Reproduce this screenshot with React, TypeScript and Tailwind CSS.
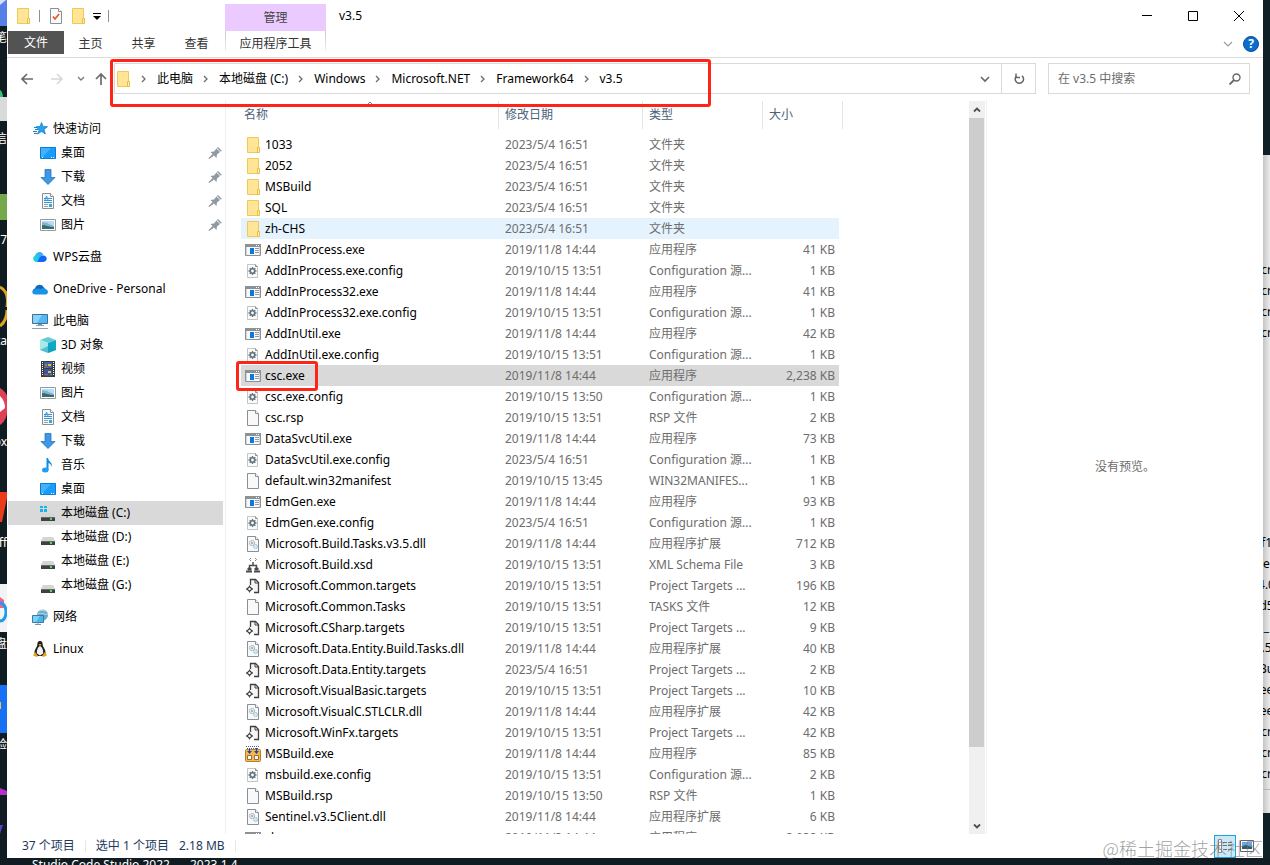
import type { ReactNode } from 'react';

type IconName =
  | 'folder'
  | 'exe'
  | 'config'
  | 'blank'
  | 'dll'
  | 'xsd'
  | 'targets'
  | 'msbuild'
  | 'star'
  | 'desktop'
  | 'download'
  | 'document'
  | 'picture'
  | 'wps'
  | 'onedrive'
  | 'pc'
  | 'cube'
  | 'video'
  | 'music'
  | 'systemDisk'
  | 'disk'
  | 'network'
  | 'linux'
  | 'pin'
  | 'check';

const DISK = (
  <>
    <path d="M3 8h10l2 4H1z" fill="#d3d5d7" />
    <path d="M1 12h14v4H1z" fill="#3f4244" />
    <path d="M1 12h14v1H1z" fill="#686b6e" />
    <path d="M10 13h2v2h-2z" fill="#4ee04e" />
  </>
);

const PAGE = (
  <>
    <path d="M2.5.5h8l3 3v12h-11z" fill="#f8f9fa" stroke="#8b8f92" />
    <path d="M10.5.5v3h3" fill="#fff" stroke="#8b8f92" />
  </>
);

const ICONS: Record<IconName, ReactNode> = {
  folder: (
    <>
      <path d="M2.5.5h11v15h-11z" fill="#ffe595" stroke="#efc958" />
      <path d="M12.5 10.5h2v5h-2z" fill="#fff0b8" stroke="#e7bd45" />
    </>
  ),
  exe: (
    <>
      <path d="M.5 2.5h15v11H.5z" fill="#f7f8f9" stroke="#8c9196" />
      <path d="M0 2h16v3H0z" fill="#8c9196" />
      <path d="M11 3h1v1h-1zM13 3h1v1h-1z" fill="#fff" />
      <path d="M1.5 5v8M14.5 5v8" stroke="#d3d7da" />
      <path d="M5 6h4v6H5z" fill="#0b78dc" />
      <path d="M10 6.5h4M10 8.5h4M10 10.5h4" stroke="#969b9f" />
    </>
  ),
  config: (
    <>
      <path d="M2.5 1.5h8l2 2v11h-10z" fill="#fafbfb" stroke="#c2c5c7" />
      <path d="M10.5 1.5v2h2" fill="none" stroke="#8b8f92" />
      <circle cx="7.5" cy="8" r="2.2" fill="#fff" stroke="#63727b" strokeWidth="1.6" />
      <path
        d="M7.5 4v1.4M7.5 10.6V12M3.5 8h1.4M10.1 8h1.4M4.7 5.2l1 1M9.3 9.8l1 1M4.7 10.8l1-1M9.3 6.2l1-1"
        stroke="#63727b"
        strokeWidth="1.3"
      />
    </>
  ),
  blank: PAGE,
  dll: (
    <>
      {PAGE}
      <circle cx="7" cy="7" r="2.6" fill="#e9edf0" stroke="#8d979e" strokeDasharray="1.2 .6" />
      <circle cx="7" cy="7" r=".9" fill="#8d979e" />
      <circle cx="10.5" cy="10.5" r="2" fill="#d6ebf7" stroke="#7fb2d0" strokeDasharray="1 .5" />
    </>
  ),
  xsd: (
    <g fill="none" stroke="#4b4b4b">
      <path d="M6 1 4.5 2.5 6 4M10 1l1.5 1.5L10 4" stroke="#808080" />
      <path d="M8 5v3M4.500 11V8.500h7V11" strokeWidth="1.400" />
      <path d="M3 11h3v2H3zM10 11h3v2h-3z" fill="#4b4b4b" />
      <path d="M1 14.500h6M9 14.500h6" strokeWidth="2" />
    </g>
  ),
  targets: (
    <>
      <path d="M5.500 7V1.500h5l3 3v10H9" fill="#f5f5f5" stroke="#3f3f3f" strokeWidth="1.300" />
      <path d="M10 1.500v3.500h3.500" fill="none" stroke="#3f3f3f" />
      <path d="M4.500 8.500 7 11l-2.500 2.500L2 11z" fill="#fff" stroke="#3f3f3f" strokeWidth="1.200" />
      <path d="M1 11h1M7 11h1M4.500 7.500v1M4.500 13.500v1" stroke="#3f3f3f" />
    </>
  ),
  msbuild: (
    <>
      <rect x=".5" y="3.5" width="15" height="12" rx="1" fill="#f8b84b" stroke="#b87d25" />
      <path d="M1 .5h14M2 2.5h12" stroke="#3a5dac" strokeDasharray="1 1" />
      <path d="M4.5 2v5M11.500 2v5" stroke="#2746a0" />
      <path d="M2 5h5L4.500 8zM9 5h5l-2.500 3z" fill="#2746a0" />
      <path d="M2.500 9.500h4v4h-4zM9.500 9.500h4v4h-4z" fill="#fff" stroke="#8c7145" />
    </>
  ),
  star: (
    <>
      <path
        d="m9.500 1.500 1.600 4 4.400.2-3.500 2.700 1.300 4.600-3.700-2.500L5.500 13l1.700-4L4 5.800l4-.3z"
        fill="#2ba1ee"
        stroke="#1780cd"
        strokeWidth=".8"
      />
      <path d="M2 6.500h3M3 8.500h3M1 10.500h4M2 12.500h3" stroke="#1780cd" />
    </>
  ),
  desktop: (
    <>
      <path d="M.5 2.500h15v11H.5z" fill="#199cfb" stroke="#087dce" />
      <path d="M1 3h10L3 12H1z" fill="#42b2ff" />
      <path d="M2 12.500h2M11 12.500h3" stroke="#fff" strokeDasharray="1 1" />
    </>
  ),
  download: <path d="M5 .5h6v8h4L8 15.500 1 8.500h4z" fill="#3c98e8" stroke="#2b72b2" strokeWidth=".8" />,
  document: (
    <>
      {PAGE}
      <path d="M4 5.500h3M8 5.500h4M4 7.500h8M4 9.500h8" stroke="#3295d9" />
      <path d="m5 7 1.500-4L8 7" fill="none" stroke="#3295d9" />
      <path d="M4 11.500h4M4 13.500h4" stroke="#9aa0a5" />
      <path d="M9 11h3v3H9z" fill="#4aa0c8" />
    </>
  ),
  picture: (
    <>
      <path d="M.5 2.500h15v11H.5z" fill="#fff" stroke="#949a9f" />
      <path d="M2 4h12v8H2z" fill="#b7dcfa" />
      <path d="M2 5c3 1 5 0 7 2l5 2v3H2z" fill="#7fb4d9" />
      <path d="M2 8c4 0 7 2 12 2v2H2z" fill="#3b6d62" />
    </>
  ),
  wps: (
    <>
      <path d="M4 13a3.500 3.500 0 0 1-1-6.500A4.500 4.500 0 0 1 11 5l-4 8z" fill="#1fd0dc" />
      <path d="M5.500 13C7 8 9 6 12 6.500c3.500.5 4 6-.5 6.500z" fill="#1068f5" />
      <path d="M5 4.500C8 2 11 4 11.500 6.400 8 6.500 7 8.500 6 10z" fill="#49a6ff" />
    </>
  ),
  onedrive: (
    <>
      <path d="M3.500 12.500C0 12 0 8 3 7.400c1-4 6.500-5 8.500-1.400L14 9l-5 3.500z" fill="#0f68bd" />
      <path d="M3.500 13.500C0 13.300-.5 10.400 1.300 9.200 5 6 8 8 9 8c2-1.500 4-1 4.500.3 3.500.4 3 5.200 0 5.200z" fill="#1a93e6" />
    </>
  ),
  pc: (
    <>
      <path d="M.5 1.500h15v9H.5z" fill="#53b8f6" stroke="#44708f" />
      <path d="M1 2h9L5 10H1z" fill="#8bd3fc" />
      <path d="M6 11h4v1H6z" fill="#7b93a4" />
      <path d="M4 12.500h8M0 15.500h16" stroke="#8da2b1" />
    </>
  ),
  cube: (
    <>
      <path d="m8 0 8 3-8 3-8-3z" fill="#65cbd9" />
      <path d="m0 3 8 3v10l-8-3z" fill="#a5ebea" />
      <path d="m16 3-8 3v10l8-3z" fill="#12a8c5" />
      <path d="m0 13 8-4 8 4-8 3z" fill="#139bb9" opacity=".55" />
    </>
  ),
  video: (
    <>
      <path d="M1 0h14v16H1z" fill="#3c3c3c" />
      <path d="M2.500 1v14M13.500 1v14" stroke="#fff" strokeDasharray="1 1" />
      <path d="M4 1h8v6H4z" fill="#3c63b0" />
      <path d="M4 8h8v7H4z" fill="#3457a0" />
      <path d="M4 6h4v1H4zM4 13h4v1H4z" fill="#d64f31" />
      <path d="M8 3h3v2H8zM8 10h3v2H8z" fill="#f1bd2e" />
      <path d="M5 3h2v2H5zM10 13h2v1h-2z" fill="#4fa84d" />
    </>
  ),
  music: (
    <>
      <path d="M8 1c.5 4 5 4 3.500 9-.3-2.500-1.500-3.500-3-4v7H6.500V1z" fill="#0d8ee6" />
      <ellipse cx="5.300" cy="13" rx="3.300" ry="2.500" fill="#1c9ff2" />
    </>
  ),
  systemDisk: (
    <>
      {DISK}
      <path d="M0 1h3v2H0zM4 1h3v2H4zM0 4h3v3H0zM4 4h3v3H4z" fill="#13b5ea" />
    </>
  ),
  disk: DISK,
  network: (
    <>
      <circle cx="10.500" cy="6" r="5.500" fill="#6fa9c6" />
      <path d="M7 2c3-2 5 1 7 0M6 5c3-2 6 1 10 0" fill="none" stroke="#b9dfee" />
      <path d="M.5 6.500h11v7H.5z" fill="#4bb4ed" stroke="#3a7ba5" />
      <path d="M1 7h7l-4 6H1z" fill="#7bd0fa" />
      <path d="M3 15.500h6M6 13v2" stroke="#7995a5" />
    </>
  ),
  linux: (
    <>
      <path
        d="M8 0c2 0 2.800 1.500 2.700 4 .1 2 3 4 2.800 8l-2 3h-7l-2-3c0-4 2.700-6 2.800-8C5.200 1.500 6 0 8 0z"
        fill="#202020"
      />
      <path d="M8 5c2 1 3.500 4 3.200 7.500L8 14.500l-3.200-2C4.500 9 6 6 8 5z" fill="#f1f1f1" />
      <path d="M6.500 3.500 8 3l1.500.5L8 5z" fill="#edae20" />
      <path d="m1 14.500 2-3.500 3 4-1 1zM15 14.500 13 11l-3 4 1 1z" fill="#e5a514" />
    </>
  ),
  pin: (
    <g fill="#8f9aa3">
      <path d="m10 3 3.500 3.500L15 6l-4-4zM9.500 3.500 7 6.500l-3.500.5 6 6 .5-3.500 3-2.500z" />
      <path d="m5.500 9.500-3.500 4 4.500-3z" stroke="#8f9aa3" />
    </g>
  ),
  check: (
    <>
      {PAGE}
      <path d="m5 8.500 2 2.500 4-5" fill="none" stroke="#e8571f" strokeWidth="1.600" />
    </>
  ),
};

function Icon({ name }: { name: IconName }) {
  return (
    <svg className="size-4 shrink-0" viewBox="0 0 16 16" aria-hidden="true">
      {ICONS[name]}
    </svg>
  );
}

interface FileEntry {
  icon: IconName;
  name: string;
  date: string;
  type: string;
  size?: string;
  state?: 'hover' | 'selected';
}

const EXE = '应用程序';
const DLL = '应用程序扩展';
const CONFIG = 'Configuration 源...';
const TARGETS = 'Project Targets ...';
const FOLDER = '文件夹';

const FILES: FileEntry[] = [
  { icon: 'folder', name: '1033', date: '2023/5/4 16:51', type: FOLDER },
  { icon: 'folder', name: '2052', date: '2023/5/4 16:51', type: FOLDER },
  { icon: 'folder', name: 'MSBuild', date: '2023/5/4 16:51', type: FOLDER },
  { icon: 'folder', name: 'SQL', date: '2023/5/4 16:51', type: FOLDER },
  { icon: 'folder', name: 'zh-CHS', date: '2023/5/4 16:51', type: FOLDER, state: 'hover' },
  { icon: 'exe', name: 'AddInProcess.exe', date: '2019/11/8 14:44', type: EXE, size: '41 KB' },
  { icon: 'config', name: 'AddInProcess.exe.config', date: '2019/10/15 13:51', type: CONFIG, size: '1 KB' },
  { icon: 'exe', name: 'AddInProcess32.exe', date: '2019/11/8 14:44', type: EXE, size: '41 KB' },
  { icon: 'config', name: 'AddInProcess32.exe.config', date: '2019/10/15 13:51', type: CONFIG, size: '1 KB' },
  { icon: 'exe', name: 'AddInUtil.exe', date: '2019/11/8 14:44', type: EXE, size: '42 KB' },
  { icon: 'config', name: 'AddInUtil.exe.config', date: '2019/10/15 13:51', type: CONFIG, size: '1 KB' },
  { icon: 'exe', name: 'csc.exe', date: '2019/11/8 14:44', type: EXE, size: '2,238 KB', state: 'selected' },
  { icon: 'config', name: 'csc.exe.config', date: '2019/10/15 13:50', type: CONFIG, size: '1 KB' },
  { icon: 'blank', name: 'csc.rsp', date: '2019/10/15 13:51', type: 'RSP 文件', size: '2 KB' },
  { icon: 'exe', name: 'DataSvcUtil.exe', date: '2019/11/8 14:44', type: EXE, size: '73 KB' },
  { icon: 'config', name: 'DataSvcUtil.exe.config', date: '2023/5/4 16:51', type: CONFIG, size: '1 KB' },
  { icon: 'blank', name: 'default.win32manifest', date: '2019/10/15 13:45', type: 'WIN32MANIFES...', size: '1 KB' },
  { icon: 'exe', name: 'EdmGen.exe', date: '2019/11/8 14:44', type: EXE, size: '93 KB' },
  { icon: 'config', name: 'EdmGen.exe.config', date: '2023/5/4 16:51', type: CONFIG, size: '1 KB' },
  { icon: 'dll', name: 'Microsoft.Build.Tasks.v3.5.dll', date: '2019/11/8 14:44', type: DLL, size: '712 KB' },
  { icon: 'xsd', name: 'Microsoft.Build.xsd', date: '2019/10/15 13:51', type: 'XML Schema File', size: '3 KB' },
  { icon: 'targets', name: 'Microsoft.Common.targets', date: '2019/10/15 13:51', type: TARGETS, size: '196 KB' },
  { icon: 'blank', name: 'Microsoft.Common.Tasks', date: '2019/10/15 13:51', type: 'TASKS 文件', size: '12 KB' },
  { icon: 'targets', name: 'Microsoft.CSharp.targets', date: '2019/10/15 13:51', type: TARGETS, size: '9 KB' },
  { icon: 'dll', name: 'Microsoft.Data.Entity.Build.Tasks.dll', date: '2019/11/8 14:44', type: DLL, size: '40 KB' },
  { icon: 'targets', name: 'Microsoft.Data.Entity.targets', date: '2023/5/4 16:51', type: TARGETS, size: '2 KB' },
  { icon: 'targets', name: 'Microsoft.VisualBasic.targets', date: '2019/10/15 13:51', type: TARGETS, size: '10 KB' },
  { icon: 'dll', name: 'Microsoft.VisualC.STLCLR.dll', date: '2019/11/8 14:44', type: DLL, size: '42 KB' },
  { icon: 'targets', name: 'Microsoft.WinFx.targets', date: '2019/10/15 13:51', type: TARGETS, size: '42 KB' },
  { icon: 'msbuild', name: 'MSBuild.exe', date: '2019/11/8 14:44', type: EXE, size: '85 KB' },
  { icon: 'config', name: 'msbuild.exe.config', date: '2019/10/15 13:51', type: CONFIG, size: '2 KB' },
  { icon: 'blank', name: 'MSBuild.rsp', date: '2019/10/15 13:50', type: 'RSP 文件', size: '1 KB' },
  { icon: 'dll', name: 'Sentinel.v3.5Client.dll', date: '2019/11/8 14:44', type: DLL, size: '6 KB' },
  { icon: 'exe', name: 'vbc.exe', date: '2019/11/8 14:44', type: EXE, size: '2,932 KB' },
];

interface NavItem {
  icon: IconName;
  label: string;
  pinned?: boolean;
  selected?: boolean;
}

interface NavGroup {
  root: NavItem;
  items: NavItem[];
}

const NAV: NavGroup[] = [
  {
    root: { icon: 'star', label: '快速访问' },
    items: [
      { icon: 'desktop', label: '桌面', pinned: true },
      { icon: 'download', label: '下载', pinned: true },
      { icon: 'document', label: '文档', pinned: true },
      { icon: 'picture', label: '图片', pinned: true },
    ],
  },
  { root: { icon: 'wps', label: 'WPS云盘' }, items: [] },
  { root: { icon: 'onedrive', label: 'OneDrive - Personal' }, items: [] },
  {
    root: { icon: 'pc', label: '此电脑' },
    items: [
      { icon: 'cube', label: '3D 对象' },
      { icon: 'video', label: '视频' },
      { icon: 'picture', label: '图片' },
      { icon: 'document', label: '文档' },
      { icon: 'download', label: '下载' },
      { icon: 'music', label: '音乐' },
      { icon: 'desktop', label: '桌面' },
      { icon: 'systemDisk', label: '本地磁盘 (C:)', selected: true },
      { icon: 'disk', label: '本地磁盘 (D:)' },
      { icon: 'disk', label: '本地磁盘 (E:)' },
      { icon: 'disk', label: '本地磁盘 (G:)' },
    ],
  },
  { root: { icon: 'network', label: '网络' }, items: [] },
  { root: { icon: 'linux', label: 'Linux' }, items: [] },
];

const CRUMBS = ['此电脑', '本地磁盘 (C:)', 'Windows', 'Microsoft.NET', 'Framework64', 'v3.5'];

function Separator() {
  return <span className="h-3 w-px bg-[#8f8f8f]" />;
}

function TitleBar() {
  return (
    <div className="flex h-[31px]">
      <div className="flex w-[218px] items-center pl-2">
        <Icon name="folder" />
        <span className="w-2" />
        <Separator />
        <button className="ml-2" aria-label="属性">
          <Icon name="check" />
        </button>
        <button className="ml-1.5" aria-label="新建文件夹">
          <Icon name="folder" />
        </button>
        <button className="mx-1.5" aria-label="自定义快速访问工具栏">
          <svg className="h-2 w-2.5" viewBox="0 0 10 8">
            <path d="M1 1.5h8" stroke="#000" />
            <path d="M1 4h8L5 8z" fill="#000" />
          </svg>
        </button>
        <Separator />
      </div>
      <div className="mt-1 flex w-[101px] items-center justify-center bg-[#ebcbff] text-[#444]">管理</div>
      <h1 className="ml-[13px] flex items-center">v3.5</h1>
      <div className="mr-px ml-auto flex">
        <button className="flex w-[46px] items-center justify-center" aria-label="最小化">
          <svg className="size-[10px]" viewBox="0 0 10 10">
            <path d="M0 4.5h10" stroke="#000" />
          </svg>
        </button>
        <button className="flex w-[46px] items-center justify-center" aria-label="最大化">
          <svg className="size-[10px]" viewBox="0 0 10 10">
            <path d="M.5.5h9v9h-9z" fill="none" stroke="#000" />
          </svg>
        </button>
        <button className="flex w-[46px] items-center justify-center" aria-label="关闭">
          <svg className="size-[10px]" viewBox="0 0 10 10">
            <path d="m0 0 10 10M10 0 0 10" stroke="#000" />
          </svg>
        </button>
      </div>
    </div>
  );
}

function RibbonTabs() {
  return (
    <div className="flex h-[27px] items-start border-b border-[#dadbdc] pl-px text-[#333]">
      <button className="h-[23px] w-14 bg-[#535353] text-white">文件</button>
      <button className="h-[25px] w-[53px]">主页</button>
      <button className="h-[25px] w-[53px]">共享</button>
      <button className="h-[25px] w-[53px]">查看</button>
      <span className="ml-0.5 h-5 w-px bg-linear-to-b from-[#c8c8c8] to-[#eee]" />
      <button className="h-[25px] w-[99px]">应用程序工具</button>
      <span className="h-5 w-px bg-linear-to-b from-[#c8c8c8] to-[#eee]" />
      <div className="mr-1 ml-auto flex h-[26px] items-center gap-2.5">
        <button aria-label="展开功能区">
          <svg className="h-2 w-2.5" viewBox="0 0 10 8">
            <path d="m1 2 4 4 4-4" fill="none" stroke="#9a9a9a" strokeWidth="1.2" />
          </svg>
        </button>
        <button
          className="size-4 rounded-full border border-[#0a4e94] bg-[#0c6cd0] text-xs leading-[14px] font-bold text-white"
          aria-label="帮助"
        >
          ?
        </button>
      </div>
    </div>
  );
}

function Crumb({ label }: { label: string }) {
  return (
    <>
      <svg className="h-2 w-[26px] shrink-0" viewBox="0 0 26 8">
        <path d="m11 1 3 3-3 3" fill="none" stroke="#6b6b6b" strokeWidth="1.3" />
      </svg>
      <button className="whitespace-nowrap">{label}</button>
    </>
  );
}

function AddressBar() {
  return (
    <div className="relative z-10 flex h-[42px] items-center pt-px pr-[13px] pb-0.5">
      <div className="flex w-[107px] items-center pl-3">
        <button aria-label="后退">
          <svg className="size-4" viewBox="0 0 16 16">
            <path d="M14 8H3m5-5L3 8l5 5" fill="none" stroke="#6b6b6b" strokeWidth="1.7" />
          </svg>
        </button>
        <button className="ml-3.5" aria-label="前进">
          <svg className="size-4" viewBox="0 0 16 16">
            <path d="M2 8h11M8 3l5 5-5 5" fill="none" stroke="#d6d6d6" strokeWidth="1.5" />
          </svg>
        </button>
        <button className="ml-3" aria-label="最近浏览的位置">
          <svg className="size-2" viewBox="0 0 8 8">
            <path d="m1 2 3 3 3-3" fill="none" stroke="#7a7a7a" strokeWidth="1.3" />
          </svg>
        </button>
        <button className="ml-2" aria-label="上移">
          <svg className="size-4" viewBox="0 0 16 16">
            <path d="M8 14V3M3 8l5-5 5 5" fill="none" stroke="#6b6b6b" strokeWidth="1.7" />
          </svg>
        </button>
      </div>
      <div className="relative flex h-[31px] flex-1 items-center border border-[#d9d9d9]">
        <Icon name="folder" />
        {CRUMBS.map((label) => (
          <Crumb key={label} label={label} />
        ))}
        <button className="mr-[11px] ml-auto" aria-label="以前的位置">
          <svg className="size-2.5" viewBox="0 0 10 10">
            <path d="m1 3 4 4 4-4" fill="none" stroke="#666" strokeWidth="1.6" />
          </svg>
        </button>
        <button
          className="flex h-full w-[34px] items-center justify-center border-l border-[#d9d9d9]"
          aria-label="刷新"
        >
          <svg className="size-3" viewBox="0 0 12 12">
            <path d="M9 2.800A4.200 4.200 0 1 1 3.500 3" fill="none" stroke="#666" strokeWidth="1.500" />
            <path d="M3 .5v4h4" fill="none" stroke="#666" strokeWidth="1.400" />
          </svg>
        </button>
        <div className="pointer-events-none absolute -top-[5px] -left-[5px] h-12 w-[601px] rounded-[3px] border-3 border-[#ff2418]" />
      </div>
      <label className="ml-3 flex h-[31px] w-[202px] items-center border border-[#d9d9d9] pr-2 pl-[9px]">
        <input
          className="min-w-0 flex-1 outline-none placeholder:text-[#6d6d6d]"
          placeholder="在 v3.5 中搜索"
          aria-label="搜索"
        />
        <svg className="size-3" viewBox="0 0 12 12">
          <circle cx="7.5" cy="4.5" r="3.5" fill="none" stroke="#666" strokeWidth="1.4" />
          <path d="M5 7 .5 11.5" stroke="#666" strokeWidth="1.8" />
        </svg>
      </label>
    </div>
  );
}

function NavLink({ item, child }: { item: NavItem; child?: boolean }) {
  return (
    <a
      href="#"
      className={`flex h-6 items-center gap-[5px] ${child ? 'pl-8' : 'pl-6'} ${item.selected ? 'bg-[#d9d9d9]' : ''}`}
    >
      <Icon name={item.icon} />
      <span className="flex-1 whitespace-nowrap">{item.label}</span>
      {item.pinned && <Icon name="pin" />}
    </a>
  );
}

function NavPane() {
  return (
    <nav className="flex w-[219px] shrink-0 flex-col gap-2 border-r border-[#f0f0f0] pt-[17px] pr-0.5 pl-px">
      {NAV.map((group) => (
        <div key={group.root.label}>
          <NavLink item={group.root} />
          {group.items.map((item) => (
            <NavLink key={item.label} item={item} child />
          ))}
        </div>
      ))}
    </nav>
  );
}

function ColumnHeader({ label, sorted }: { label: string; sorted?: boolean }) {
  return (
    <th className="h-[34px] p-0 align-top font-normal">
      <div
        className={`relative mt-px flex h-7 items-center border-r border-[#e5e5e5] ${sorted ? 'pl-[3px]' : 'pl-1.5'}`}
      >
        {label}
        {sorted && (
          <svg className="absolute top-0 left-1/2 h-1 w-2 -translate-x-1/2" viewBox="0 0 8 4">
            <path d="m1 4 3-3 3 3" fill="none" stroke="#777" />
          </svg>
        )}
      </div>
    </th>
  );
}

const ROW_BG = {
  hover: 'bg-[#e5f3ff]',
  selected: 'bg-[#d9d9d9]',
  none: '',
};

function FileRow({ file }: { file: FileEntry }) {
  const bg = ROW_BG[file.state ?? 'none'];

  return (
    <tr className="h-[21px] whitespace-nowrap text-[#6d6d6d]">
      <td className={`p-0 text-black ${bg}`}>
        <div className="relative flex h-[21px] items-center gap-1 pl-1">
          <Icon name={file.icon} />
          {file.name}
          {file.state === 'selected' && (
            <span className="pointer-events-none absolute -top-1 -left-[5px] z-10 h-[30px] w-[82px] rounded-[3px] border-3 border-[#ff2418]" />
          )}
        </div>
      </td>
      <td className={`p-0 pl-1.5 ${bg}`}>{file.date}</td>
      <td className={`p-0 pl-1.5 ${bg}`}>{file.type}</td>
      <td className={`p-0 pr-1 text-right ${bg}`}>{file.size}</td>
      <td className="p-0" />
    </tr>
  );
}

function FileList() {
  return (
    <div className="flex-1 overflow-hidden pl-[15px]">
      <table className="w-[602px] table-fixed border-collapse">
        <colgroup>
          <col className="w-[258px]" />
          <col className="w-[144px]" />
          <col className="w-[120px]" />
          <col className="w-[76px]" />
          <col className="w-1" />
        </colgroup>
        <thead>
          <tr className="text-left text-[#4c607a]">
            <ColumnHeader label="名称" sorted />
            <ColumnHeader label="修改日期" />
            <ColumnHeader label="类型" />
            <th className="h-[34px] p-0 pl-1.5 align-top font-normal">
              <div className="mt-px flex h-7 items-center">大小</div>
            </th>
            <th className="p-0 align-top">
              <div className="mt-px h-7 border-r border-[#e5e5e5]" />
            </th>
          </tr>
        </thead>
        <tbody>
          {FILES.map((file) => (
            <FileRow key={file.name} file={file} />
          ))}
        </tbody>
      </table>
    </div>
  );
}

function ScrollBar() {
  return (
    <div className="mt-px mr-px flex w-4 shrink-0 flex-col bg-[#f0f0f0]">
      <button className="flex h-[17px] items-center justify-center" aria-label="向上滚动">
        <svg className="size-2" viewBox="0 0 8 8">
          <path d="m1 5.5 3-3 3 3" fill="none" stroke="#505050" strokeWidth="1.8" />
        </svg>
      </button>
      <div className="mr-px flex-[629] bg-[#cdcdcd]" />
      <div className="flex-[70]" />
      <button className="flex h-[17px] items-center justify-center" aria-label="向下滚动">
        <svg className="size-2" viewBox="0 0 8 8">
          <path d="m1 2.5 3 3 3-3" fill="none" stroke="#505050" strokeWidth="1.8" />
        </svg>
      </button>
    </div>
  );
}

function StatusBar() {
  return (
    <div className="relative flex h-6 items-center pl-[15px] text-[#1e395b]">
      <span>37 个项目</span>
      <span className="mx-2.5 h-3 w-px bg-[#e8e8e8]" />
      <span>选中 1 个项目</span>
      <span className="ml-2.5">2.18 MB</span>
      <span className="mx-2.5 h-3 w-px bg-[#e8e8e8]" />
      <div className="mr-[5px] ml-auto flex items-center">
        <button
          className="flex h-[23px] w-[22px] items-center justify-center border border-[#26a0da] bg-[#cbe8f6]"
          aria-label="详细信息"
        >
          <svg className="size-3.5" viewBox="0 0 14 14">
            <path d="M.5.5h3v13h-3z" fill="#fff" stroke="#888" />
            <path d="M5 3.5h9M5 6.5h9M5 10.5h9" stroke="#707070" strokeDasharray="4 1" />
            <path d="M2 3v1M2 6v1M2 10v1" stroke="#c55" />
          </svg>
        </button>
        <button className="flex h-[23px] w-[22px] items-center justify-center" aria-label="大图标">
          <svg className="h-3 w-3.5" viewBox="0 0 14 12">
            <path d="M.5.5h13v11H.5z" fill="#fff" stroke="#666" />
            <path d="M2 2h10v7H2z" fill="#69a8e8" />
            <path d="m2 6 4-1 6 2v2H2z" fill="#315b6b" />
          </svg>
        </button>
      </div>
      <span className="pointer-events-none absolute top-0 right-0 font-['Noto_Sans_CJK_SC',sans-serif] text-lg leading-7 font-light whitespace-nowrap text-[#777]/70">
        @稀土掘金技术社区
      </span>
    </div>
  );
}

const DESKTOP_LABELS = ['笔', '信', '7', 'ta', 'ox', 'ff', '网盘', '验'];

function DesktopLeft() {
  return (
    <div className="relative w-[7px] shrink-0 overflow-hidden">
      <svg className="absolute inset-0 h-[865px] w-[7px]" viewBox="0 0 7 865">
        <path d="M0 0h7v865H0z" fill="#0f1d23" />
        <path d="M0 0h7v26H0z" fill="#5580e8" />
        <path d="M0 0h6L0 5z" fill="#d5def5" />
        <path d="M0 90c2 1 3 4 3 8H0z" fill="#38c172" />
        <path d="M0 97h7v24H0z" fill="#d9dadb" />
        <path d="M0 194h7v26H0z" fill="#74a84a" />
        <path d="M0 287c8 4 8 14 7 20M7 310c0 6-2 12-7 16" fill="none" stroke="#e0a51e" strokeWidth="3" />
        <path d="M0 388q6 4 7 8v18q-2 8-7 11z" fill="#df4157" />
        <path d="M0 396q5 5 5 12l-5 4z" fill="#fff" />
        <path d="M0 492h7v6L2 522H0z" fill="#ea3b1d" />
        <path d="M0 584h7v48H0z" fill="#f1f3f5" />
        <path d="M0 597l4 3v8H0z" fill="#ef6488" />
        <path d="M0 603c8 0 8 18 0 18" fill="none" stroke="#209bea" strokeWidth="3" />
        <path d="M0 685h7v48H0z" fill="#1671f5" />
        <path d="M0 702h1v7H0z" fill="#f6c14a" />
        <path d="M0 788l7 3v4H0z" fill="#b62fcb" />
        <path d="M0 825h3l-3 9z" fill="#5841c0" />
      </svg>
      <div className="relative flex flex-col gap-[81px] pt-7 text-white">
        {DESKTOP_LABELS.map((label) => (
          <span key={label} className="flex h-5 justify-end whitespace-nowrap">
            {label}
          </span>
        ))}
      </div>
    </div>
  );
}

const BACK_WINDOW_TOP = ['cr', 'cr', 'cr', 'cr'];
const BACK_WINDOW_BOTTOM = ['f1', 'e', '4.0', 'd5', '_', '.5', 'Bu', 'ee', 'ee', 'cr', 'cr', 'cr'];

function BackWindowRows({ labels }: { labels: string[] }) {
  return (
    <div>
      {labels.map((label, i) => (
        <div key={i} className="flex h-[21px] justify-center whitespace-nowrap">
          {label}
        </div>
      ))}
    </div>
  );
}

function DesktopRight() {
  return (
    <div className="w-[7px] shrink-0 overflow-hidden bg-[#0f2027] pt-[155px]">
      <div className="flex h-[658px] flex-col bg-linear-to-r from-[#c4c4c4] to-[#ececec] pt-[105px]">
        <BackWindowRows labels={BACK_WINDOW_TOP} />
        <div className="h-[189px]" />
        <BackWindowRows labels={BACK_WINDOW_BOTTOM} />
        <div className="mt-1 border-t border-[#b5b5b5]" />
      </div>
    </div>
  );
}

export default function App() {
  return (
    <div className="flex h-screen flex-col overflow-hidden bg-[#101c21] font-['Noto_Sans','Noto_Sans_CJK_SC',sans-serif] text-xs leading-5 text-black">
      <div className="flex min-h-0 flex-1">
        <DesktopLeft />
        <main className="flex min-w-0 flex-1 flex-col bg-white">
          <TitleBar />
          <RibbonTabs />
          <AddressBar />
          <div className="flex min-h-0 flex-1 overflow-hidden">
            <NavPane />
            <FileList />
            <ScrollBar />
            <aside className="flex w-[277px] shrink-0 items-center justify-center border-l border-[#f0f0f0] text-[#6d6d6d]">
              没有预览。
            </aside>
          </div>
          <StatusBar />
        </main>
        <DesktopRight />
      </div>
      <div className="flex h-[7px] shrink-0 gap-5 overflow-hidden pl-8 leading-[14px] text-white">
        <span>Studio Code Studio 2022</span>
        <span>2023.1.4</span>
      </div>
    </div>
  );
}
